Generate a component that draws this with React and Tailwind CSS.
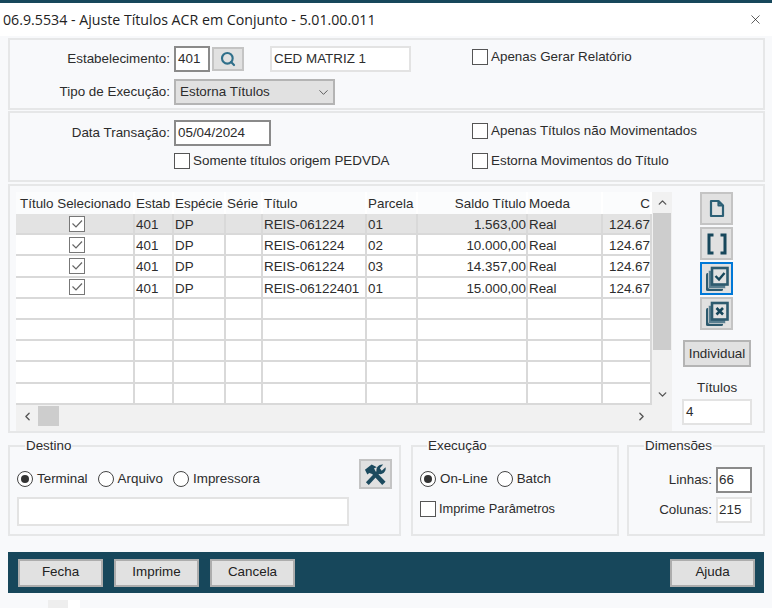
import React from "react";
import { ChevronDown, ChevronUp, ChevronLeft, ChevronRight, X, Search } from "lucide-react";

const Check = ({ checked = false }) => (
  <span className={`flex h-4 w-4 shrink-0 items-center justify-center border bg-white ${checked ? "border-[#777]" : "border-[#555]"}`}>
    {checked && (
      <svg width="12" height="12" viewBox="0 0 12 12" fill="none">
        <path d="M1.5 5.5 L5 9 L11 2.5" stroke="#666" strokeWidth="1.2" />
      </svg>
    )}
  </span>
);

const CheckLabel = ({ children }) => (
  <label className="flex h-4 items-center gap-[3px]">
    <Check />
    <span>{children}</span>
  </label>
);

const Radio = ({ on = false, children }) => (
  <label className="flex items-center gap-[4px]">
    <span className="flex h-4 w-4 items-center justify-center rounded-full border border-[#444] bg-white">
      {on && <span className="h-2 w-2 rounded-full bg-[#333]" />}
    </span>
    <span>{children}</span>
  </label>
);

const Panel = ({ className = "", children }) => (
  <div className={`border-2 border-[#e6e7e8] ${className}`}>{children}</div>
);

const Group = ({ title, className = "", legendClass = "", children }) => (
  <fieldset className={`border-2 border-[#e6e7e8] ${className}`}>
    <legend className={`leading-4 ${legendClass}`}>{title}</legend>
    {children}
  </fieldset>
);

const BarButton = ({ children }) => (
  <button className="h-[28px] w-[85px] border-2 border-[#adadad] bg-[#e1e1e1] text-[#222]">{children}</button>
);

const IconButton = ({ focused = false, children }) => (
  <button
    className={`flex h-[33px] w-[33px] items-center justify-center bg-[#e1e1e1] ${
      focused ? "border-2 border-[#0078d7]" : "border-2 border-[#c4c4c4]"
    }`}
  >
    {children}
  </button>
);

const StackIcon = ({ children }) => (
  <svg width="24" height="26" viewBox="0 0 24 26" fill="none">
    <rect x="1" y="7" width="17" height="18" rx="1.5" fill="#2d5a6e" />
    <rect x="3.5" y="4.5" width="17" height="18" rx="1" fill="#5a7f90" stroke="#d0d4d6" strokeWidth="0.8" />
    <rect x="7" y="2" width="15.5" height="16.5" fill="#e1e1e1" stroke="#2d5a6e" strokeWidth="2.6" />
    {children}
  </svg>
);

const columns = [
  { key: "sel", w: "w-[119px]", label: "Título Selecionado", cls: "text-center pl-[2px]" },
  { key: "est", w: "w-[39px]", label: "Estab", cls: "pl-[1px]" },
  { key: "esp", w: "w-[52px]", label: "Espécie", cls: "pl-[1px]" },
  { key: "ser", w: "w-[37px]", label: "Série", cls: "pl-[1px]" },
  { key: "tit", w: "w-[104px]", label: "Título", cls: "pl-[1px]" },
  { key: "par", w: "w-[51px]", label: "Parcela", cls: "pl-[1px]" },
  { key: "sal", w: "w-[110px]", label: "Saldo Título", cls: "text-right" },
  { key: "moe", w: "w-[75px]", label: "Moeda", cls: "pl-[1px]" },
  { key: "c", w: "w-[49px]", label: "C", cls: "text-right" },
];

const rows = [
  { est: "401", esp: "DP", tit: "REIS-061224", par: "01", sal: "1.563,00", moe: "Real", c: "124.67" },
  { est: "401", esp: "DP", tit: "REIS-061224", par: "02", sal: "10.000,00", moe: "Real", c: "124.67" },
  { est: "401", esp: "DP", tit: "REIS-061224", par: "03", sal: "14.357,00", moe: "Real", c: "124.67" },
  { est: "401", esp: "DP", tit: "REIS-06122401", par: "01", sal: "15.000,00", moe: "Real", c: "124.67" },
  {}, {}, {}, {}, {},
];

const inputLight = "border-2 border-[#e3e3e3] bg-white";
const inputDark = "border-2 border-[#8a8a8a] bg-white";

export default function App() {
  return (
    <div className="h-[608px] w-[772px] overflow-hidden bg-[#f8f9fb] text-[13.4px] text-[#2c2c2c]" style={{ fontFamily: '"Liberation Sans", Arial, sans-serif' }}>
      <div className="h-[3px] bg-[#17475b]" />
      <div className="flex h-[33px] items-center justify-between bg-white pl-[3px] pr-[9px]">
        <span className="text-[14.2px] text-[#222]" style={{ fontFamily: '"Open Sans", sans-serif' }}>06.9.5534 - Ajuste Títulos ACR em Conjunto - 5.01.00.011</span>
        <X size={15} strokeWidth={1} className="text-black" />
      </div>

      <div className="flex w-[765px] flex-col pl-[8px]">
        {/* Panel 1 */}
        <Panel className="mt-[2px] flex h-[72px] w-[757px]">
          <div className="flex w-[462px] flex-col pt-[6px]">
            <div className="flex h-[26px] items-center">
              <span className="w-[162px] pr-[2px] text-right">Estabelecimento:</span>
              <span className={`ml-[2px] flex h-[26px] w-[36px] items-center pl-[2px] ${inputDark}`}>401</span>
              <button className="ml-[2px] flex h-[24px] w-[32px] items-center justify-center border-2 border-[#c4c4c4] bg-[#e1e1e1]">
                <Search size={16} strokeWidth={3.2} className="text-[#2f6f8a]" />
              </button>
              <span className={`ml-[26px] flex h-[26px] w-[141px] items-center pl-[2px] ${inputLight}`}>CED MATRIZ 1</span>
            </div>
            <div className="mt-[7px] flex h-[26px] items-center">
              <span className="w-[162px] pr-[2px] text-right">Tipo de Execução:</span>
              <span className="ml-[2px] flex h-[26px] w-[161px] items-center justify-between border-2 border-[#b4b4b4] bg-[#e1e1e1] pl-[4px] pr-[2px]">
                Estorna Títulos
                <ChevronDown size={15} strokeWidth={1.5} className="text-[#555]" />
              </span>
            </div>
          </div>
          <div className="pt-[9px]">
            <CheckLabel>Apenas Gerar Relatório</CheckLabel>
          </div>
        </Panel>

        {/* Panel 2 */}
        <Panel className="mt-[1px] flex h-[71px] w-[757px]">
          <div className="flex w-[462px] flex-col pt-[7px]">
            <div className="flex h-[26px] items-center">
              <span className="w-[162px] pr-[2px] text-right">Data Transação:</span>
              <span className={`ml-[2px] flex h-[26px] w-[97px] items-center pl-[2px] ${inputDark}`}>05/04/2024</span>
            </div>
            <div className="ml-[164px] mt-[7px]">
              <CheckLabel>Somente títulos origem PEDVDA</CheckLabel>
            </div>
          </div>
          <div className="flex flex-col gap-[14px] pt-[10px]">
            <CheckLabel>Apenas Títulos não Movimentados</CheckLabel>
            <CheckLabel>Estorna Movimentos do Título</CheckLabel>
          </div>
        </Panel>

        {/* Panel 3 */}
        <Panel className="mt-[2px] flex h-[249px] w-[757px] pl-[6px] pt-[6px]">
          <div className="w-[656px] bg-[#f1f1f1]">
            <div className="flex h-[213px]">
              <div className="h-[213px] w-[636px] overflow-hidden bg-white">
                <div className="flex h-[22px] bg-[#fbfcfd]">
                  {columns.map((c) => (
                    <div key={c.key} className={`${c.w} h-[22px] shrink-0 whitespace-nowrap border-r-2 border-white leading-[24px] ${c.cls}`}>{c.label}</div>
                  ))}
                </div>
                {rows.map((r, i) => (
                  <div key={i} className={`flex h-[21.2px] border-b-2 border-[#d9d9d9] ${i === 0 ? "bg-[#e3e3e3]" : "bg-white"}`}>
                    {columns.map((c) => (
                      <div key={c.key} className={`${c.w} shrink-0 overflow-hidden whitespace-nowrap border-r-2 border-[#d9d9d9] leading-[21px] ${c.cls} ${c.key === "sel" ? "flex items-center justify-center pl-[4px]" : ""}`}>
                        {c.key === "sel" ? (r.est ? <Check checked /> : null) : r[c.key]}
                      </div>
                    ))}
                  </div>
                ))}
              </div>
              <div className="flex h-[213px] w-[20px] flex-col items-center bg-[#f1f1f1]">
                <ChevronUp size={13} strokeWidth={2.5} className="my-[4px] text-[#555]" />
                <div className="h-[137px] w-[18px] bg-[#cdcdcd]" />
                <ChevronDown size={13} strokeWidth={2.5} className="mt-[38px] text-[#555]" />
              </div>
            </div>
            <div className="flex h-[22px] items-center bg-[#f1f1f1]">
              <ChevronLeft size={13} strokeWidth={2.5} className="ml-[5px] text-[#555]" />
              <div className="ml-[4px] h-[20px] w-[21px] bg-[#cdcdcd]" />
              <ChevronRight size={13} strokeWidth={2.5} className="ml-[576px] text-[#555]" />
            </div>
          </div>
          <div className="ml-[9px] flex w-[72px] flex-col items-center">
            <div className="-ml-[1px] flex flex-col items-center gap-[2px]">
              <IconButton>
                <svg width="16" height="19" viewBox="0 0 16 19" fill="none" stroke="#2d6076" strokeWidth="2.2" strokeLinejoin="round">
                  <path d="M2 2 H9.5 L14 6.5 V17 H2 Z M9.5 2 V6.5 H14" />
                </svg>
              </IconButton>
              <IconButton>
                <svg width="20" height="22" viewBox="0 0 20 22" fill="none" stroke="#17475b" strokeWidth="3">
                  <path d="M6.5 2 H2 V20 H6.5 M13.5 2 H18 V20 H13.5" />
                </svg>
              </IconButton>
              <IconButton focused>
                <StackIcon>
                  <path d="M10.5 10 L14 13.5 L19.5 7" stroke="#17475b" strokeWidth="2.4" />
                </StackIcon>
              </IconButton>
              <IconButton>
                <StackIcon>
                  <path d="M11.5 7 L18 13.5 M18 7 L11.5 13.5" stroke="#17475b" strokeWidth="2.6" />
                </StackIcon>
              </IconButton>
            </div>
            <button className="mt-[10px] h-[27px] w-[68px] border-2 border-[#b4b4b4] bg-[#e1e1e1] pt-[1px]">Individual</button>
            <div className="mt-[13px] leading-4">Títulos</div>
            <div className={`mt-[3px] flex h-[26px] w-[70px] items-center pl-[2px] ${inputLight}`}>4</div>
          </div>
        </Panel>

        {/* Groups */}
        <div className="mt-[5px] flex h-[98px] w-[757px]">
          <Group title="Destino" legendClass="ml-[8px] px-[1px]" className="h-[98px] w-[393px] pl-[7px]">
            <div className="flex items-start">
              <div className="w-[342px] pt-[15px]">
                <div className="flex h-[20px] items-center gap-[10px]">
                  <Radio on>Terminal</Radio>
                  <Radio>Arquivo</Radio>
                  <Radio>Impressora</Radio>
                </div>
                <div className={`mt-[8px] h-[29px] w-[332px] ${inputLight}`} />
              </div>
              <button className="mt-[5px] flex h-[30px] w-[33px] items-center justify-center border-2 border-[#c4c4c4] bg-[#e1e1e1]">
                <svg width="23" height="23" viewBox="0 0 24 24" fill="#1c4a5e">
                  <path d="M1 7 L8 1.5 L13.5 4.5 L10.5 5.5 L12 8.5 L22.5 19.5 L19 23 L8.5 11.5 L5.5 10.5 L3.5 12 Z" />
                  <path d="M2 20 L13 8.5 C12.5 4.5 15.5 1 20 1.5 L16.5 5.5 L18.5 8 L22.5 4.5 C23.5 9 19.5 12.5 15.5 11.5 L5 23 Z" />
                </svg>
              </button>
            </div>
          </Group>
          <Group title="Execução" legendClass="ml-[7px] px-[1px]" className="ml-[10px] h-[98px] w-[208px] pl-[7px]">
            <div className="mt-[15px] flex h-[20px] items-center gap-[9px]">
              <Radio on>On-Line</Radio>
              <Radio>Batch</Radio>
            </div>
            <div className="mt-[12px] text-[12.8px]">
              <CheckLabel>Imprime Parâmetros</CheckLabel>
            </div>
          </Group>
          <Group title="Dimensões" legendClass="ml-[15px] px-[1px]" className="ml-[8px] h-[98px] w-[138px]">
            <div className="mt-[13px] flex h-[26px] items-center justify-end pr-[11px]">
              <span className="mr-[4px]">Linhas:</span>
              <span className={`flex h-[26px] w-[36px] items-center pl-[1px] ${inputDark}`}>66</span>
            </div>
            <div className="mt-[4px] flex h-[26px] items-center justify-end pr-[11px]">
              <span className="mr-[4px]">Colunas:</span>
              <span className={`flex h-[26px] w-[36px] items-center pl-[1px] ${inputLight}`}>215</span>
            </div>
          </Group>
        </div>

        {/* Bottom bar */}
        <div className="mt-[16px] flex h-[41px] w-[756px] items-center justify-between bg-[#17475b] pl-[10px] pr-[9px]">
          <div className="flex gap-[11px]">
            <BarButton>Fecha</BarButton>
            <BarButton>Imprime</BarButton>
            <BarButton>Cancela</BarButton>
          </div>
          <BarButton>Ajuda</BarButton>
        </div>
      </div>
      <div className="ml-[48px] mt-[7px] flex h-[8px]">
        <div className="h-[8px] w-[20px] bg-[#eeeeee]" />
        <div className="h-[8px] w-[12px] bg-white" />
      </div>
    </div>
  );
}
